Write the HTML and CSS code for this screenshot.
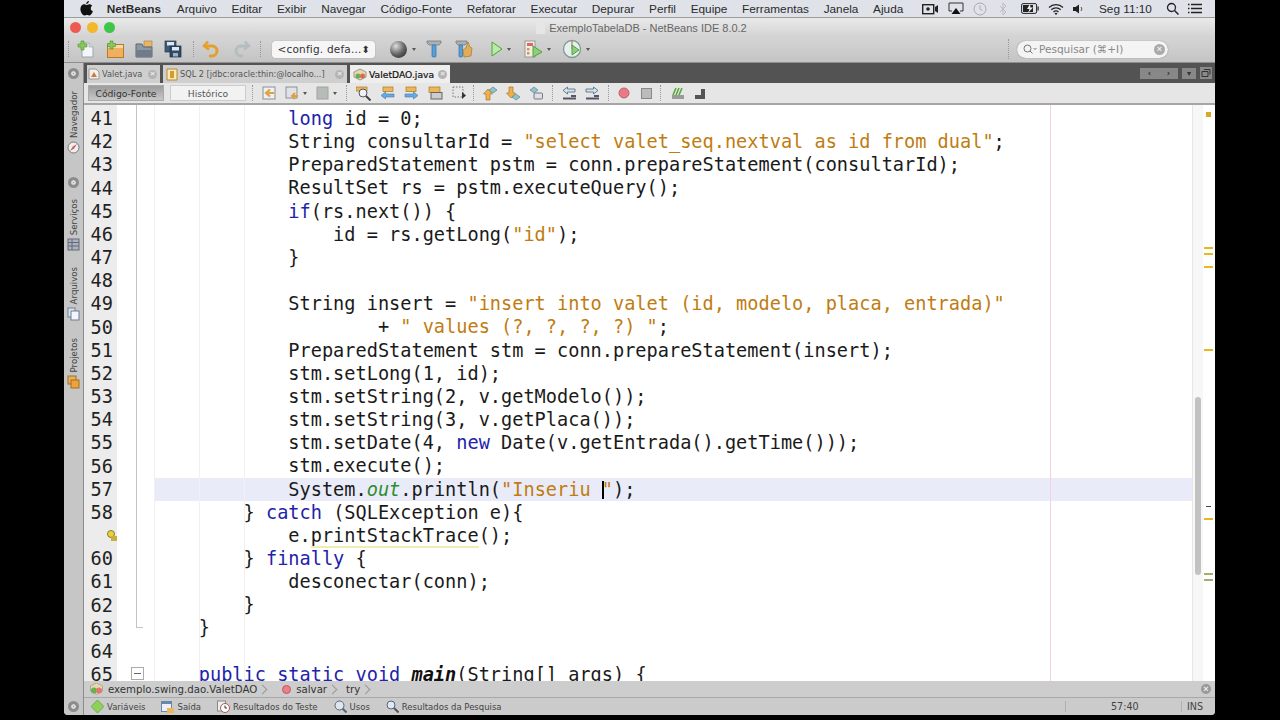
FILE: index.html
```html
<!DOCTYPE html>
<html lang="en">
<head>
  <meta charset="UTF-8" />
  <title>ExemploTabelaDB - NetBeans IDE 8.0.2</title>
  <link rel="stylesheet" href="styles.css">
</head>
<body>
<div class="screen">

  <div class="menubar">
    <svg class="apple" width="13" height="15" viewBox="0 0 13 15"><path d="M9 0c0 1.500-1.200 3-2.800 3C6.100 1.500 7.500.2 9 0zM6.400 4c.7 0 1.600-.8 3-.8 1.100 0 2.200.6 2.900 1.600-2.300 1.400-1.900 4.500.6 5.500-.7 1.800-2 4.200-3.400 4.200-.9 0-1.300-.6-2.500-.6s-1.700.6-2.500.6C2.700 14.500.4 11 .4 8c0-3 1.900-4.700 3.700-4.700 1 0 1.800.7 2.300.7z" fill="#111"/></svg>
    <span class="menu-app">NetBeans</span>
    <span>Arquivo</span><span>Editar</span><span>Exibir</span><span>Navegar</span><span>Código-Fonte</span><span>Refatorar</span><span>Executar</span><span>Depurar</span><span>Perfil</span><span>Equipe</span><span>Ferramentas</span><span>Janela</span><span>Ajuda</span>
    <div class="tray">
      <svg width="17" height="12" viewBox="0 0 17 12"><rect x=".7" y="1.700" width="11" height="9" fill="none" stroke="#222" stroke-width="1.400"/><circle cx="6" cy="6" r="1.800" fill="#222"/><path d="M13 4l3-2v8l-3-2z" fill="#222"/></svg>
      <svg width="16" height="13" viewBox="0 0 16 13"><path d="M1 1h14v8h-3M4 9H1V1" fill="none" stroke="#333"/><path d="M8 6l4.500 6h-9z" fill="#111"/></svg>
      <svg width="14" height="14" viewBox="0 0 14 14"><circle cx="7" cy="7" r="6" fill="none" stroke="#aaa"/><path d="M7 3.500V7l2.500 1.500" fill="none" stroke="#aaa"/></svg>
      <svg class="tray-bt" width="8" height="14" viewBox="0 0 8 14"><path d="M1 4l6 6-3 3V1l3 3-6 6" fill="none" stroke="#bbb"/></svg>
      <svg class="tray-batt" width="18" height="11" viewBox="0 0 18 11"><rect x=".6" y=".6" width="15" height="9.800" rx="1.500" fill="none" stroke="#222"/><rect x="2" y="2" width="10" height="7" fill="#222"/><path d="M9 1L6 6h2.500L7 10l5-5.500H9.500z" fill="#eee"/><rect x="16.500" y="3.500" width="1.200" height="4" fill="#222"/></svg>
      <svg width="16" height="12" viewBox="0 0 16 12"><path d="M1 4.500a10 10 0 0 1 14 0M3.300 6.800a6.800 6.800 0 0 1 9.400 0M5.500 9a3.600 3.600 0 0 1 5 0" fill="none" stroke="#222" stroke-width="1.200"/><path d="M8 12l-1.500-1.500a2 2 0 0 1 3 0z" fill="#222"/></svg>
      <svg width="11" height="10" viewBox="0 0 11 10"><path d="M0 3h2.500L6 .5v9L2.500 7H0z" fill="#222"/><path d="M8 3a3 3 0 0 1 0 4" fill="none" stroke="#555"/></svg>
      <span class="clock">Seg 11:10</span>
      <svg class="tray-find" width="13" height="13" viewBox="0 0 13 13"><circle cx="5.500" cy="5.500" r="4" fill="none" stroke="#222" stroke-width="1.300"/><path d="M8.500 8.500l4 4" stroke="#222" stroke-width="1.500"/></svg>
      <svg width="14" height="11" viewBox="0 0 14 11"><path d="M3 1.500h11M3 5.500h11M3 9.500h11" stroke="#222" stroke-width="1.300"/><path d="M0 1.500h1.500M0 5.500h1.500M0 9.500h1.500" stroke="#222" stroke-width="1.300"/></svg>
    </div>
  </div>

  <div class="titlebar">
    <div class="lights"><i class="red"></i><i class="yellow"></i><i class="green"></i></div>
    <div class="title"><svg width="9" height="12" viewBox="0 0 9 12"><path d="M0 0h6l3 3v9H0z" fill="#e6e6e6"/></svg>ExemploTabelaDB - NetBeans IDE 8.0.2</div>
  </div>

  <div class="toolbar">
    <i class="sep sep-first"></i>
    <svg width="18" height="18" viewBox="0 0 18 18"><path d="M5 3h7l4 4v10H5z" fill="#f4f6f8" stroke="#9aa6b0"/><path d="M12 3v4h4" fill="#d8dde2" stroke="#9aa6b0" stroke-width=".7"/><path d="M4 1h3v3h3v3H7v3H4V7H1V4h3z" fill="#86c95a" stroke="#4f8f2a" stroke-width=".6"/></svg>
    <svg width="18" height="18" viewBox="0 0 18 18"><rect x="1.500" y="4.500" width="16" height="13" fill="#f0b060" stroke="#b87a22"/><rect x="2" y="5" width="15" height="3" fill="#f8d8a4"/><path d="M4 1h3v2.500h2.500v3H7V9H4V6.500H1.500v-3H4z" fill="#86c95a" stroke="#4f8f2a" stroke-width=".6"/></svg>
    <svg width="18" height="18" viewBox="0 0 18 18"><rect x="9" y="1" width="8" height="6" fill="#e8b468" stroke="#a98036" stroke-width=".6"/><path d="M1 4h6l1.500 3H17v10H1z" fill="#8c98a4" stroke="#5c6670"/><rect x="1.500" y="10" width="15" height="6.500" fill="#6e7c8a"/></svg>
    <svg width="18" height="18" viewBox="0 0 18 18"><rect x="1" y="1" width="11" height="11" fill="#3f5a78" stroke="#23384e" stroke-width=".7"/><rect x="3" y="2" width="7" height="3.500" fill="#dfe6ec"/><rect x="6" y="6" width="11" height="11" fill="#2f4a68" stroke="#1b2e44" stroke-width=".7"/><rect x="8" y="7" width="7" height="3.500" fill="#dfe6ec"/><rect x="9" y="13" width="5" height="3.500" fill="#9fb2c4"/></svg>
    <i class="sep sep-undo"></i>
    <svg width="19" height="18" viewBox="0 0 19 18"><path d="M6 1.500L2 6l5 3.500" fill="none" stroke="#e3a02c" stroke-width="2.600"/><path d="M3 6h7a4.500 4.500 0 0 1 0 10H7" fill="none" stroke="#e3a02c" stroke-width="3"/></svg>
    <svg width="19" height="18" viewBox="0 0 19 18"><path d="M13 1.500L17 6l-5 3.500" fill="none" stroke="#b4bec0" stroke-width="2.600"/><path d="M16 6H9a4.500 4.500 0 0 0 0 10h2" fill="none" stroke="#b4bec0" stroke-width="3"/></svg>
    <i class="sep sep-config"></i>
    <div class="config">&lt;config. defa...<span class="updown">⬍</span></div>
    <svg class="globe" width="19" height="19" viewBox="0 0 19 19"><defs><radialGradient id="ball" cx=".35" cy=".3" r=".8"><stop offset="0" stop-color="#ddd"/><stop offset=".6" stop-color="#666"/><stop offset="1" stop-color="#333"/></radialGradient></defs><circle cx="9.500" cy="9.500" r="8.500" fill="url(#ball)"/></svg><b class="drop"></b>
    <svg class="hammer" width="16" height="18" viewBox="0 0 16 18"><path d="M1 1h14v2l-2 2H3L1 3z" fill="#aab0b4" stroke="#6c7276" stroke-width=".7"/><rect x="6" y="5" width="4" height="12" rx="1" fill="#5b9fd8" stroke="#2f6fa8" stroke-width=".7"/></svg>
    <svg class="clean" width="18" height="18" viewBox="0 0 18 18"><path d="M1 1h11v2l-2 2H3L1 3z" fill="#aab0b4" stroke="#6c7276" stroke-width=".7"/><rect x="4" y="5" width="3.500" height="12" rx="1" fill="#5b9fd8" stroke="#2f6fa8" stroke-width=".7"/><path d="M13 2l2 5 2 1-1 8-7 1-1-7 3-2z" fill="#e3ac5c" stroke="#a87a20" stroke-width=".7"/></svg>
    <svg class="run" width="12" height="16" viewBox="0 0 12 16"><path d="M1 1l10 7-10 7z" fill="#b8eca4" stroke="#4ea23c"/></svg><b class="drop"></b>
    <svg class="debug" width="19" height="18" viewBox="0 0 19 18"><rect x="1" y="1" width="10" height="16" fill="#f2eee6" stroke="#999"/><rect x="3" y="3" width="6" height="3" fill="#d66"/><rect x="3" y="8" width="2.500" height="2.500" fill="#c96"/><rect x="3" y="12" width="2.500" height="2.500" fill="#c96"/><path d="M9 6l9 6-9 5z" fill="#8ed07a" stroke="#4ea23c"/></svg><b class="drop"></b>
    <svg class="profile" width="20" height="20" viewBox="0 0 20 20"><circle cx="10" cy="10" r="8.500" fill="#e6f0f0" stroke="#7f9a90" stroke-width="1.300"/><path d="M10 2v8" stroke="#c55"/><path d="M10 6l7 5-7 5z" fill="#8ed07a" stroke="#4ea23c"/></svg><b class="drop"></b>
    <i class="sep sep-search"></i>
    <div class="search">
      <svg width="14" height="10" viewBox="0 0 14 10"><circle cx="4.500" cy="4.500" r="3.500" fill="none" stroke="#777"/><path d="M7 7l2.500 2.500" stroke="#777"/><path d="M10.500 4l1.500 1.500L13.500 4" fill="none" stroke="#777"/></svg>
      <span>Pesquisar (⌘+I)</span>
      <i class="clear"></i>
    </div>
  </div>

  <div class="workspace">
    <aside class="sidebar">
      <i class="round-btn"></i>
      <div class="side-tab tab-nav"><span>Navegador</span><svg width="13" height="13" viewBox="0 0 13 13"><circle cx="6.500" cy="6.500" r="5.500" fill="#eee" stroke="#777"/><path d="M3 10l3-4.500L10 3 7 7.500z" fill="#c55"/></svg></div>
      <i class="round-btn round-mid"></i>
      <div class="side-tab tab-serv"><span>Serviços</span><svg width="13" height="13" viewBox="0 0 13 13"><rect x="1" y="1" width="11" height="11" fill="#aab4c0" stroke="#667"/><path d="M1 4.500h11M1 8h11M5 1v11" stroke="#667"/></svg></div>
      <div class="side-tab tab-arq"><span>Arquivos</span><svg width="13" height="14" viewBox="0 0 13 14"><rect x="1" y="1" width="7" height="9" fill="#dde6f0" stroke="#6b7f96"/><rect x="4" y="4" width="8" height="9" fill="#f4f6fa" stroke="#6b7f96"/></svg></div>
      <div class="side-tab tab-proj"><span>Projetos</span><svg width="13" height="14" viewBox="0 0 13 14"><rect x="1" y="1" width="8" height="8" fill="#e8b060" stroke="#a07020"/><rect x="4" y="5" width="8" height="8" fill="#eda23c" stroke="#a07020"/></svg></div>
    </aside>

    <main class="main">
      <div class="tabstrip">
        <div class="filetab tab-valet">
          <svg width="12" height="12" viewBox="0 0 12 12"><path d="M1 1h7l3 3v7H1z" fill="#f4efe6" stroke="#999"/><path d="M3 9l3-5 3 5z" fill="#c97a4a"/></svg>
          Valet.java<i class="tab-x"></i>
        </div>
        <div class="filetab tab-sql">
          <svg width="12" height="13" viewBox="0 0 12 13"><path d="M1 1h10v11H1z" fill="#f7e9b8" stroke="#b08a30"/><rect x="4" y="3" width="4" height="7" fill="#d99a2a"/></svg>
          SQL 2 [jdbc:oracle:thin:@localho...]<i class="tab-x"></i>
        </div>
        <div class="filetab tab-active">
          <svg width="14" height="13" viewBox="0 0 14 13"><path d="M7 1l6 3v5l-6 3-6-3V4z" fill="#e8d8b0" stroke="#998"/><circle cx="5" cy="8" r="2.500" fill="#6bb04a"/><circle cx="9.500" cy="8" r="2.500" fill="#d96a5a"/></svg>
          ValetDAO.java<i class="tab-x"></i>
        </div>
        <div class="tab-controls">
          <div class="ctl-pair"><b>‹</b><b>›</b></div>
          <div class="ctl"><b>▾</b></div>
          <svg width="12" height="12" viewBox="0 0 12 12"><rect width="12" height="12" fill="#8a8a8a"/><path d="M4 2.500h6v5M2 4.500h6v5H2z" fill="none" stroke="#333"/></svg>
        </div>
      </div>

      <div class="edit-toolbar">
        <div class="mode-btn mode-on">Código-Fonte</div>
        <div class="mode-btn">Histórico</div>
        <i class="sep sep-a"></i>
        <svg width="14" height="14" viewBox="0 0 14 14"><rect x="1" y="1" width="12" height="12" fill="#eef0f2" stroke="#8a9098"/><path d="M12 7H6M8 3.500L4 7l4 3.500" fill="none" stroke="#e0a040" stroke-width="2.200"/></svg>
        <svg width="14" height="14" viewBox="0 0 14 14"><rect x="1" y="1" width="11" height="11" fill="#dfe3e8" stroke="#8a9098"/><path d="M13 10H8M10 7l-3 3 3 3" fill="none" stroke="#e0a040" stroke-width="2"/></svg><b class="drop"></b>
        <svg width="13" height="14" viewBox="0 0 13 14"><rect x="1" y="1" width="11" height="12" fill="#b8bcb8" stroke="#a0a4a0"/></svg><b class="drop"></b>
        <i class="sep sep-b"></i>
        <svg width="15" height="15" viewBox="0 0 15 15"><rect x="0" y="1" width="11" height="4" fill="#eeb65a" stroke="#a87a20" stroke-width=".7"/><circle cx="7" cy="7" r="4" fill="#eef2f6" stroke="#556"/><path d="M10 10l4.500 4.500" stroke="#444" stroke-width="2"/></svg>
        <svg width="15" height="14" viewBox="0 0 15 14"><rect x="3" y="1" width="10" height="4.500" fill="#eeb65a" stroke="#a87a20" stroke-width=".7"/><path d="M1 9.500l4.500-3.500v2H14v3H5.500v2z" fill="#6aa8e0" stroke="#3f78b0" stroke-width=".6"/></svg>
        <svg width="15" height="14" viewBox="0 0 15 14"><rect x="2" y="1" width="10" height="4.500" fill="#eeb65a" stroke="#a87a20" stroke-width=".7"/><path d="M14 9.500L9.500 6v2H1v3h8.500v2z" fill="#6aa8e0" stroke="#3f78b0" stroke-width=".6"/></svg>
        <svg width="15" height="14" viewBox="0 0 15 14"><rect x="1" y="1" width="11" height="5.500" fill="#eeb65a" stroke="#a87a20" stroke-width=".7"/><rect x="3" y="6.500" width="11" height="6.500" fill="#ccc" stroke="#666"/></svg>
        <svg width="15" height="14" viewBox="0 0 15 14"><rect x="1" y="1" width="10" height="10" fill="none" stroke="#777" stroke-dasharray="1.500 1.500"/><path d="M10 6l4 3.500-4 3.500z" fill="#333"/></svg>
        <i class="sep sep-c"></i>
        <svg width="14" height="15" viewBox="0 0 14 15"><path d="M5 3l4.500 5H7v6H3V8H.5z" fill="#f0b050" stroke="#a87a20" stroke-width=".7"/><path d="M10 1l4 3-4 3-4-3z" fill="#8cc4cc" stroke="#578" stroke-width=".6"/></svg>
        <svg width="14" height="15" viewBox="0 0 14 15"><path d="M5 12L.5 7H3V1h4v6h2.500z" fill="#f0b050" stroke="#a87a20" stroke-width=".7"/><path d="M10 8l4 3-4 3-4-3z" fill="#8cc4cc" stroke="#578" stroke-width=".6"/></svg>
        <svg width="14" height="15" viewBox="0 0 14 15"><path d="M5 1l4 3-4 3-4-3z" fill="#8cc4cc" stroke="#578" stroke-width=".6"/><rect x="5" y="7" width="8.500" height="6" rx="1" fill="#dde2e6" stroke="#778"/></svg>
        <i class="sep sep-d"></i>
        <svg width="14" height="14" viewBox="0 0 14 14"><path d="M1 4.500L5.500 1v2H13v3H5.500v2z" fill="#d0e4f0" stroke="#567" stroke-width=".8"/><path d="M9 10h5M1 12.500h13" stroke="#556" stroke-width="2"/></svg>
        <svg width="14" height="14" viewBox="0 0 14 14"><path d="M13 4.500L8.500 1v2H1v3h7.500v2z" fill="#d0e4f0" stroke="#567" stroke-width=".8"/><path d="M9 10h5M1 12.500h13" stroke="#556" stroke-width="2"/></svg>
        <i class="sep sep-e"></i>
        <svg width="12" height="12" viewBox="0 0 12 12"><circle cx="6" cy="6" r="5" fill="#ea7a86" stroke="#b8656c"/></svg>
        <svg class="stop" width="11" height="11" viewBox="0 0 11 11"><rect x=".5" y=".5" width="10" height="10" fill="#bbb" stroke="#888"/></svg>
        <i class="sep sep-f"></i>
        <svg width="14" height="14" viewBox="0 0 14 14"><path d="M2 9l3-7M5 9l3-7M8 9l3-7" stroke="#5aa83a" stroke-width="1.600"/><rect x="1" y="9" width="12" height="4" fill="#9a9a9a"/></svg>
        <svg width="12" height="14" viewBox="0 0 12 14"><rect x="7" y="3" width="4" height="6" fill="#555"/><rect x="1" y="9" width="10" height="4" fill="#555"/></svg>
      </div>

      <div class="editor">
        <i class="guide guide-1"></i><i class="guide guide-2"></i><i class="guide guide-3"></i>
        <i class="fold-line"></i>
        <i class="margin-line"></i>
        <div class="gutter">
          <div>41</div><div>42</div><div>43</div><div>44</div><div>45</div><div>46</div><div>47</div><div>48</div><div>49</div><div>50</div><div>51</div><div>52</div><div>53</div><div>54</div><div>55</div><div>56</div><div>57</div><div>58</div>
          <div class="bulb-row"><svg width="10" height="11" viewBox="0 0 10 11"><circle cx="4" cy="4" r="3.500" fill="#e6d23c" stroke="#8a7a20"/><rect x="4" y="6" width="6" height="5" fill="#c8b040"/></svg></div>
          <div>60</div><div>61</div><div>62</div><div>63</div><div>64</div><div>65</div>
        </div>
        <pre class="code"><div>            <b class="kw">long</b> id = 0;</div><div>            String consultarId = <b class="str">"select valet_seq.nextval as id from dual"</b>;</div><div>            PreparedStatement pstm = conn.prepareStatement(consultarId);</div><div>            ResultSet rs = pstm.executeQuery();</div><div>            <b class="kw">if</b>(rs.next()) {</div><div>                id = rs.getLong(<b class="str">"id"</b>);</div><div>            }</div><div> </div><div>            String insert = <b class="str">"insert into valet (id, modelo, placa, entrada)"</b></div><div>                    + <b class="str">" values (?, ?, ?, ?) "</b>;</div><div>            PreparedStatement stm = conn.prepareStatement(insert);</div><div>            stm.setLong(1, id);</div><div>            stm.setString(2, v.getModelo());</div><div>            stm.setString(3, v.getPlaca());</div><div>            stm.setDate(4, <b class="kw">new</b> Date(v.getEntrada().getTime()));</div><div>            stm.execute();</div><div class="current">            System.<em class="field">out</em>.println(<b class="str">"Inseriu <i class="caret"></i>"</b>);</div><div>        } <b class="kw">catch</b> (SQLException e){</div><div>            e.<u class="hint">printStackTrace</u>();</div><div>        } <b class="kw">finally</b> {</div><div>            desconectar(conn);</div><div>        }</div><div>    }</div><div> </div><div>    <b class="kw">public static void</b> <em class="method">main</em>(String[] args) {</div></pre>
        <i class="fold-box"></i>
        <i class="fold-end"></i>
        <div class="scroll-strip"><i class="thumb"></i></div>
        <div class="stripe">
          <i class="mark mark-top"></i>
          <i class="mark m1"></i><i class="mark m2"></i><i class="mark m3"></i><i class="mark m4"></i>
          <i class="mark m5"></i><i class="mark m6"></i><i class="mark m7"></i><i class="mark m8"></i>
        </div>
      </div>

      <div class="crumbs">
        <svg width="13" height="12" viewBox="0 0 13 12"><path d="M6.500 0l6 3v5l-6 3.500-6-3.500V3z" fill="#e8d8b0" stroke="#998" stroke-width=".7"/><circle cx="4" cy="7.500" r="3" fill="#6bb04a"/><circle cx="9" cy="7.500" r="3" fill="#e07a70"/></svg>
        <span>exemplo.swing.dao.ValetDAO</span><i class="chev"></i>
        <svg class="crumb-dot" width="9" height="9" viewBox="0 0 9 9"><circle cx="4.500" cy="4.500" r="4" fill="#e8808a" stroke="#c55"/></svg>
        <span>salvar</span><i class="chev"></i>
        <span>try</span><i class="chev"></i>
        <i class="crumb-close"></i>
      </div>

      <div class="statusbar">
        <svg width="13" height="13" viewBox="0 0 13 13"><path d="M6.500 0L13 6.500 6.500 13 0 6.500z" fill="#8ed05a" stroke="#5a9a3a" stroke-width=".7"/></svg>
        <span class="st">Variáveis</span>
        <svg width="13" height="12" viewBox="0 0 13 12"><rect x=".5" y=".5" width="10" height="10" fill="#eef" stroke="#68a"/><rect x=".5" y=".5" width="10" height="2.500" fill="#68a"/><rect x="6" y="7" width="7" height="5" fill="#eeb65a"/></svg>
        <span class="st">Saída</span>
        <svg width="13" height="13" viewBox="0 0 13 13"><rect x=".5" y="1" width="8" height="10" fill="#eee" stroke="#888"/><circle cx="8" cy="8" r="4.500" fill="#fff" stroke="#a55"/><path d="M8 5.500V8h2" fill="none" stroke="#333"/></svg>
        <span class="st">Resultados do Teste</span>
        <svg width="13" height="13" viewBox="0 0 13 13"><circle cx="5.500" cy="5.500" r="4.500" fill="#dde6ee" stroke="#567"/><path d="M8.500 8.500l4 4" stroke="#567" stroke-width="2"/></svg>
        <span class="st">Usos</span>
        <svg width="13" height="13" viewBox="0 0 13 13"><circle cx="5" cy="5" r="4" fill="#dfe9f4" stroke="#567"/><path d="M8 8l4.500 4.500" stroke="#555" stroke-width="2"/></svg>
        <span class="st">Resultados da Pesquisa</span>
        <div class="status-right"><span class="pos">57:40</span><span class="ins">INS</span></div>
      </div>
      <i class="round-btn round-bottom"></i>
    </main>
  </div>
</div>
</body>
</html>
```

FILE: styles.css
```css
* {
  box-sizing: border-box;
}

html, body {
  margin: 0;
  height: 720px;
  overflow: hidden;
  background: #000;
}

body {
  font-family: "Liberation Sans", Arial, sans-serif;
  color: #222;
}

svg {
  flex: none;
  display: block;
}

.screen {
  width: 1151px;
  height: 715px;
  margin-left: 64px;
  display: flex;
  flex-direction: column;
  background: #c9c9c9;
  border-radius: 0 0 4px 4px;
  overflow: hidden;
}

/* mac menu bar */
.menubar {
  height: 18px;
  flex: none;
  display: flex;
  align-items: center;
  gap: 14.7px;
  padding-left: 16px;
  font-size: 11.8px;
  white-space: nowrap;
  background: #dfe2e8;
  border-bottom: 1px solid #9b9b9b;
  color: #2a2a2a;
}

.apple {
  margin-right: -1px;
}

.menu-app {
  font-weight: bold;
  margin-right: 1px;
}

.tray {
  display: flex;
  align-items: center;
  margin-left: 4px;
  gap: 9px;
}

.tray-bt { margin-left: 3px; }
.tray-batt { margin-left: 5px; }
.tray-find { margin-left: 5px; }

.clock {
  margin-left: 6px;
}

/* title bar */
.titlebar {
  height: 20px;
  flex: none;
  position: relative;
  background: linear-gradient(#eaeaea, #d2d2d2);
  display: flex;
  align-items: center;
  justify-content: center;
  font-size: 11px;
  color: #666;
}

.lights {
  position: absolute;
  left: 6px;
  top: 4px;
  display: flex;
  gap: 6px;
}

.lights i {
  width: 11px;
  height: 11px;
  border-radius: 50%;
}

.red { background: #ee5a52; }
.yellow { background: #f3b72c; }
.green { background: #3cc74a; }

.title {
  display: flex;
  align-items: center;
  gap: 4px;
  margin-left: 4px;
}

/* main toolbar */
.toolbar {
  height: 25px;
  flex: none;
  display: flex;
  align-items: center;
  gap: 11px;
  padding: 0 0 2px 4px;
  background: linear-gradient(#d4d4d4, #c4c4c4);
  border-bottom: 1px solid #8f8f8f;
}

.sep {
  width: 0;
  height: 16px;
  flex: none;
  border-left: 1px dotted #999;
}

.sep-first { margin-right: -3px; }
.sep-undo { margin-right: -3.5px; }
.sep-config { margin-left: -2px; }

.config {
  width: 103px;
  height: 17px;
  background: #f6f6f6;
  border-radius: 3px;
  box-shadow: 0 0 1px #777;
  letter-spacing: .2px;
  font-family: "DejaVu Sans", sans-serif;
  font-size: 10.5px;
  line-height: 17px;
  white-space: nowrap;
  padding: 0 5px 0 6px;
  display: flex;
  justify-content: space-between;
  color: #333;
}

.updown {
  font-size: 10px;
}

.globe { margin-left: 3.5px; }
.hammer { margin-left: -1px; }
.clean { margin-left: 2px; }
.run { margin-left: 7px; }
.debug { margin-left: 1.5px; }
.profile { margin-left: .5px; }

.drop {
  width: 0;
  height: 0;
  margin-left: -7px;
  border: 2px solid transparent;
  border-top: 3px solid #555;
  margin-top: 2px;
  flex: none;
}

.sep-search {
  margin-left: auto;
  margin-right: -3px;
  height: 20px;
}

.search {
  width: 151px;
  height: 17px;
  margin-right: 47px;
  background: #f4f4f4;
  border-radius: 9px;
  box-shadow: 0 0 1px #666;
  display: flex;
  align-items: center;
  padding: 0 3px 0 6px;
  font-family: "DejaVu Sans", sans-serif;
  font-size: 10.5px;
  white-space: nowrap;
  color: #888;
  gap: 2px;
}

/* little round close buttons */
.clear, .tab-x, .crumb-close {
  display: flex;
  align-items: center;
  justify-content: center;
  border-radius: 50%;
  background: #aaa;
  color: #eee;
  font: bold 9px/1 "Liberation Sans", sans-serif;
  -webkit-text-stroke: 0;
}

.clear::after, .tab-x::after, .crumb-close::after {
  content: "×";
}

.clear {
  margin-left: auto;
  width: 11px;
  height: 11px;
}

/* left sidebar */
.workspace {
  flex: 1;
  min-height: 0;
  display: flex;
}

.sidebar {
  width: 20px;
  flex: none;
  position: relative;
  background: #c6c6c6;
  border-right: 1px solid #8d8d8d;
}

.round-btn {
  display: block;
  width: 11px;
  height: 11px;
  margin: 5px auto 0;
  border-radius: 50%;
  background: #8c8c8c;
  border: 3px solid #8c8c8c;
  box-shadow: inset 0 0 0 2px #ddd;
}

.round-mid {
  position: absolute;
  left: 4px;
  top: 114px;
  margin: 0;
}

.round-bottom {
  position: absolute;
  left: 68px;
  top: 701px;
  margin: 0;
}

.side-tab {
  position: absolute;
  left: 3px;
  display: flex;
  flex-direction: column;
  align-items: center;
  gap: 3px;
  width: 13px;
  font-family: "DejaVu Sans", sans-serif;
  font-size: 8.6px;
  color: #444;
}

.side-tab span {
  writing-mode: vertical-rl;
  transform: rotate(180deg);
  white-space: nowrap;
}

.tab-nav { top: 28px; }
.tab-serv { top: 136px; }
.tab-arq { top: 204px; }
.tab-proj { top: 275px; }

/* file tabs */
.main {
  flex: 1;
  min-width: 0;
  display: flex;
  flex-direction: column;
}

.tabstrip {
  height: 20px;
  flex: none;
  display: flex;
  gap: 3px;
  padding: 2px 0 0 3px;
  background: #535353;
  font-family: "DejaVu Sans", sans-serif;
  font-size: 8.2px;
  white-space: nowrap;
  color: #555;
}

.filetab {
  display: flex;
  align-items: center;
  gap: 2px;
  padding: 0 3px;
  height: 18px;
  background: #cfcfcf;
}

.tab-valet {
  width: 73px;
  padding-left: 1px;
}

.tab-sql { width: 184px; }

.tab-active {
  width: 100px;
  background: #eeeeee;
  color: #111;
  font-size: 9.2px;
  -webkit-text-stroke: .2px #111;
}

.tab-x {
  margin-left: auto;
  width: 9px;
  height: 9px;
  background: #b4b4b4;
  font-size: 8px;
}

.tab-controls {
  margin-left: auto;
  display: flex;
  align-items: center;
  gap: 4px;
  padding: 0 3px 2px 0;
}

.ctl-pair, .ctl {
  display: flex;
  height: 11px;
  background: #888;
  font-size: 8px;
  line-height: 11px;
  color: #333;
  text-align: center;
}

.ctl-pair b {
  width: 19px;
}

.ctl b {
  width: 14px;
}

/* editor toolbar */
.edit-toolbar {
  height: 22px;
  flex: none;
  display: flex;
  align-items: center;
  gap: 9px;
  padding-left: 3px;
  background: #e6e6e6;
  border-bottom: 2px solid #a6a6a6;
}

.mode-btn {
  width: 76px;
  height: 16px;
  background: #f2f2f2;
  border: 1px solid #ccc;
  font-family: "DejaVu Sans", sans-serif;
  font-size: 9.2px;
  line-height: 15px;
  text-align: center;
  color: #555;
}

.mode-on {
  background: linear-gradient(#9c9c9c, #c8c8c8);
  border-color: #aaa;
  color: #333;
  margin-left: 1px;
  margin-right: -3px;
}

.edit-toolbar .drop {
  margin-left: -5px;
}

.stop { margin-left: 2px; }

.sep-a { margin-left: -3px; }
.sep-c { margin-left: -3px; }
.sep-f { margin: 0 1px 0 -1px; }

/* code area */
.editor {
  flex: 1;
  min-height: 0;
  position: relative;
  display: flex;
  background: #fff;
  overflow: hidden;
}

.gutter {
  width: 33px;
  flex: none;
  padding: 2px 4px 0 0;
  background: #ececec;
  text-align: right;
  font-family: "DejaVu Sans Mono", monospace;
  font-size: 18.6px;
  line-height: 23.17px;
  color: #222;
}

.bulb-row {
  height: 23.17px;
  display: flex;
  justify-content: flex-end;
  align-items: center;
  margin-right: -4px;
}

.code {
  margin: 0 0 0 37px;
  padding-top: 2px;
  flex: 1;
  font-family: "DejaVu Sans Mono", monospace;
  font-size: 18.6px;
  line-height: 23.17px;
  color: #1a1a1a;
}

.code div {
  height: 23.17px;
}

.code b {
  font-weight: normal;
}

.current {
  background: #e9ecf8;
}

.kw { color: #2222aa; }
.str { color: #c07c10; }

.field {
  color: #2e8b2e;
}

.method {
  font-weight: bold;
  color: #111;
}

.hint {
  text-decoration: none;
  border-bottom: 2px solid #f3ecb0;
}

.caret {
  display: inline-block;
  width: 2px;
  height: 18px;
  margin-right: -2px;
  vertical-align: -3px;
  background: #000;
}

.guide {
  position: absolute;
  top: 0;
  bottom: 0;
  width: 1px;
  background: #f1f1f1;
  z-index: 1;
}

.guide-1 { left: 70px; }
.guide-2 { left: 115px; }
.guide-3 { left: 160px; }

.fold-line {
  position: absolute;
  left: 52px;
  top: 0;
  height: 522px;
  width: 1px;
  background: #c4c4c4;
}

.fold-end {
  position: absolute;
  left: 52px;
  top: 522px;
  width: 7px;
  height: 1px;
  background: #c4c4c4;
}

.fold-box {
  position: absolute;
  left: 47px;
  top: 562px;
  width: 13px;
  height: 13px;
  background: #fff;
  border: 1px solid #aaa;
}

.fold-box::after {
  content: "";
  position: absolute;
  left: 2px;
  right: 2px;
  top: 5px;
  height: 1px;
  background: #666;
}

.margin-line {
  position: absolute;
  left: 966px;
  top: 0;
  bottom: 0;
  width: 1px;
  background: #f0d4dc;
  z-index: 2;
}

.scroll-strip {
  width: 11px;
  flex: none;
  position: relative;
  background: #f7f7f7;
  border-left: 1px solid #e6e6e6;
}

.thumb {
  position: absolute;
  left: 2px;
  top: 292px;
  width: 6px;
  height: 178px;
  border-radius: 3px;
  background: #c2c2c2;
}

.stripe {
  width: 12px;
  flex: none;
  position: relative;
  background: #fff;
}

.mark {
  position: absolute;
  left: 1px;
  width: 9px;
  height: 2px;
  background: #e8b820;
}

.mark-top {
  left: 3px;
  top: 7px;
  width: 5px;
  height: 5px;
  background: #d8a828;
}

.m1 { top: 142px; }
.m2 { top: 148px; }
.m3 { top: 161px; }
.m4 { top: 244px; }
.m5 { top: 401px; height: 1px; left: 3px; width: 5px; background: #444; }
.m6 { top: 413px; }
.m7 { top: 468px; background: #a8ac70; }
.m8 { top: 474px; background: #a8ac70; }

/* breadcrumbs */
.crumbs {
  height: 17px;
  flex: none;
  display: flex;
  align-items: center;
  gap: 5px;
  padding-left: 6px;
  background: #cdcdcd;
  border-bottom: 1px solid #a8a8a8;
  font-family: "DejaVu Sans", sans-serif;
  font-size: 10.2px;
  color: #333;
}

.chev {
  width: 7px;
  height: 7px;
  margin: 0 5px 0 -3px;
  border-top: 1px solid #999;
  border-right: 1px solid #999;
  transform: rotate(45deg);
}

.crumb-dot { margin-left: 6px; }

.crumb-close {
  margin: 0 4px 0 auto;
  width: 10px;
  height: 10px;
  background: #999;
}

/* status bar */
.statusbar {
  height: 17px;
  flex: none;
  display: flex;
  align-items: center;
  gap: 3px;
  padding-left: 7px;
  background: #cbcbcb;
  font-family: "DejaVu Sans", sans-serif;
  font-size: 8.5px;
  color: #444;
}

.st { margin-right: 13px; }

.status-right {
  margin-left: auto;
  display: flex;
  align-items: center;
  font-size: 9.6px;
}

.pos {
  width: 116px;
  padding-left: 45px;
  border-left: 1px solid #b0b0b0;
}

.ins {
  width: 34px;
  padding-left: 5px;
  border-left: 1px solid #b0b0b0;
}
```
